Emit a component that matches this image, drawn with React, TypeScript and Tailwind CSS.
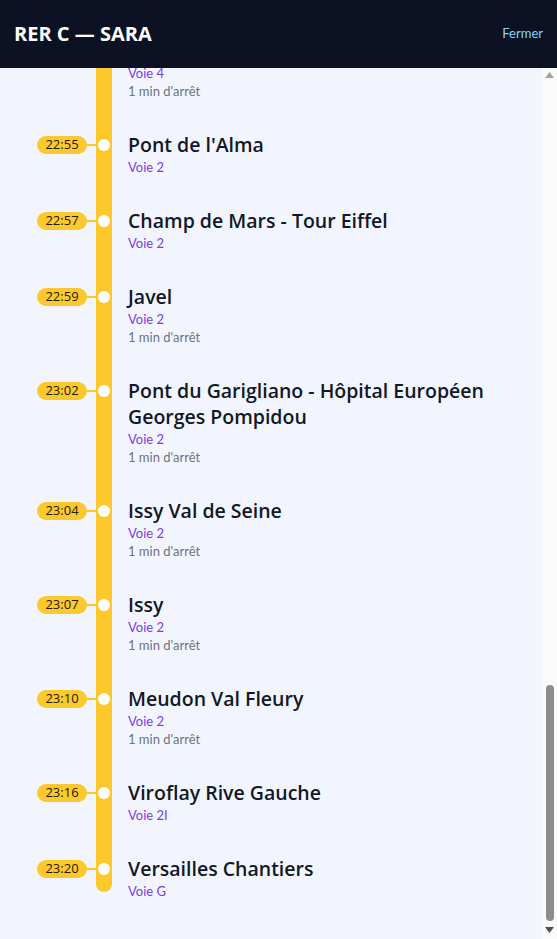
import React, { useEffect, useRef } from "react";

type Stop = {
  time: string;
  name: string;
  track: string;
  dwell?: boolean;
};

const stops: Stop[] = [
  { time: "22:41", name: "Bibliothèque François Mitterrand", track: "Voie 1", dwell: true },
  { time: "22:44", name: "Gare d'Austerlitz", track: "Voie 2", dwell: true },
  { time: "22:47", name: "Saint-Michel Notre-Dame", track: "Voie 2", dwell: true },
  { time: "22:49", name: "Musée d'Orsay", track: "Voie 2" },
  { time: "22:52", name: "Invalides", track: "Voie 4", dwell: true },
  { time: "22:55", name: "Pont de l'Alma", track: "Voie 2" },
  { time: "22:57", name: "Champ de Mars - Tour Eiffel", track: "Voie 2" },
  { time: "22:59", name: "Javel", track: "Voie 2", dwell: true },
  { time: "23:02", name: "Pont du Garigliano - Hôpital Européen Georges Pompidou", track: "Voie 2", dwell: true },
  { time: "23:04", name: "Issy Val de Seine", track: "Voie 2", dwell: true },
  { time: "23:07", name: "Issy", track: "Voie 2", dwell: true },
  { time: "23:10", name: "Meudon Val Fleury", track: "Voie 2", dwell: true },
  { time: "23:16", name: "Viroflay Rive Gauche", track: "Voie 2I" },
  { time: "23:20", name: "Versailles Chantiers", track: "Voie G" },
];

const App: React.FC = () => {
  const scrollRef = useRef<HTMLDivElement>(null);

  useEffect(() => {
    const el = scrollRef.current;
    if (el) el.scrollTop = el.scrollHeight;
  }, []);

  return (
    <div className="flex h-[939px] flex-col bg-[#f3f5fe] font-['Lato',sans-serif]">
      {/* HEADER */}
      <header className="flex h-[68px] shrink-0 items-center justify-between bg-[#0c1224] px-[14px]">
        <h1 className="font-['Open_Sans',sans-serif] text-[20px] font-bold text-white">
          RER C — SARA
        </h1>
        <button className="text-[13px] text-[#86d6f2]">Fermer</button>
      </header>

      <div className="flex min-h-0 flex-1">
        {/* STOPS */}
        <div
          ref={scrollRef}
          className="min-w-0 flex-1 overflow-y-auto [scrollbar-width:none]"
        >
          <div className="relative pt-4 pb-[39px]">
            <div className="absolute top-4 bottom-[47px] left-[96px] w-4 rounded-full bg-[#fcc82c]" />

            {stops.map((s, i) => (
              <div
                key={s.time}
                className={`relative flex ${i === stops.length - 1 ? "" : "pb-8"}`}
              >
                <div className="flex h-[26px] w-[128px] shrink-0 items-center">
                  <span className="ml-[37px] flex h-[18px] w-[50px] items-center justify-center rounded-full bg-[#fcc82c] font-['Open_Sans',sans-serif] text-[13px] text-[#1c1a10]">
                    {s.time}
                  </span>
                  <span className="h-[2px] w-[11px] bg-[#fcc82c]" />
                  <span className="size-3 rounded-full bg-white" />
                </div>
                <div className="min-w-0 pr-4">
                  <p className="font-['Open_Sans',sans-serif] text-[19.5px] leading-[26px] font-semibold text-[#111827]">
                    {s.name}
                  </p>
                  <p className="text-[13px] leading-[18px] text-[#7c3aed]">{s.track}</p>
                  {s.dwell && (
                    <p className="text-[13px] leading-[18px] text-[#6b7280]">1 min d'arrêt</p>
                  )}
                </div>
              </div>
            ))}
          </div>
        </div>

        {/* scrollbar */}
        <div className="flex w-[15px] shrink-0 flex-col items-center bg-[#fafafa]">
          <svg width="9" height="6" viewBox="0 0 9 6" className="mt-[4px]">
            <path d="M4.5 0 L9 6 L0 6 Z" fill="#a3a3a3" />
          </svg>
          <div className="mt-auto h-[236px] w-[8px] rounded-full bg-[#8c8c8c]" />
          <svg width="9" height="6" viewBox="0 0 9 6" className="mt-[6px] mb-[6px]">
            <path d="M0 0 L9 0 L4.5 6 Z" fill="#505050" />
          </svg>
        </div>
      </div>
    </div>
  );
};

export default App;
